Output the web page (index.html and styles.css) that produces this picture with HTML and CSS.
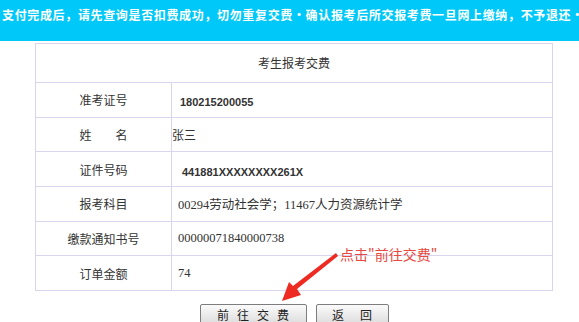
FILE: index.html
```html
<!DOCTYPE html>
<html lang="zh-CN">
<head>
  <meta charset="UTF-8" />
  <title>考生报考交费</title>
  <link rel="stylesheet" href="styles.css">
</head>
<body>

  <!-- Bandeau d'avertissement -->
  <div class="notice">
    <p>支付完成后，请先查询是否扣费成功，切勿重复交费•确认报考后所交报考费一旦网上缴纳，不予退还•</p>
  </div>

  <div class="page">
    <table class="pay-table">
      <tr class="title-row">
        <td colspan="2" class="title-cell">考生报考交费</td>
      </tr>
      <tr>
        <td class="label">准考证号</td>
        <td class="value num">180215200055</td>
      </tr>
      <tr>
        <td class="label">姓&emsp;&emsp;名</td>
        <td class="value flush">张三</td>
      </tr>
      <tr>
        <td class="label">证件号码</td>
        <td class="value num wide">441881XXXXXXXX261X</td>
      </tr>
      <tr>
        <td class="label">报考科目</td>
        <td class="value">00294劳动社会学；11467人力资源统计学</td>
      </tr>
      <tr>
        <td class="label">缴款通知书号</td>
        <td class="value">00000071840000738</td>
      </tr>
      <tr>
        <td class="label">订单金额</td>
        <td class="value">74</td>
      </tr>
    </table>

    <div class="actions">
      <button class="btn btn-pay">前往交费</button>
      <button class="btn btn-back">返&emsp;回</button>
    </div>

    <!-- annotation rouge -->
    <div class="hint">点击"前往交费"</div>
    <svg class="arrow" width="60" height="52" viewBox="0 0 60 52">
      <polygon points="56,2 58,5 17,38 21,44 2,50 9,31 13,35" fill="#ee2b22"/>
    </svg>
  </div>

</body>
</html>
```

FILE: styles.css
```css
body {
  margin: 0;
  padding: 0;
  background: #ffffff;
  font-family: "Noto Sans CJK SC", sans-serif;
  color: #333333;
  overflow: hidden;
}

.notice {
  height: 41px;
  background-color: #00c9fa;
  overflow: hidden;
}

.notice p {
  margin: 0;
  padding: 7px 0 0 2px;
  white-space: nowrap;
  color: #ffffff;
  font-weight: bold;
  font-size: 12px;
  letter-spacing: 0.65px;
  line-height: 16px;
}

.page {
  position: relative;
  width: 518px;
  margin-left: 35px;
  padding-top: 2px;
}

.pay-table {
  width: 518px;
  border-collapse: collapse;
  font-size: 12px;
}

.pay-table tr {
  height: 34.7px;
}

.pay-table tr.title-row {
  height: 39px;
}

.pay-table td {
  border: 1px solid #d8d6ee;
  padding: 0;
}

.pay-table .title-cell {
  text-align: center;
  color: #333333;
  padding-bottom: 2px;
}

.label {
  width: 135px;
  text-align: center;
}

.value {
  padding-left: 6px !important;
  font-family: "Liberation Serif", "Noto Sans CJK SC", serif;
  font-size: 12.5px;
}

.value.flush {
  padding-left: 0 !important;
  font-family: "Noto Sans CJK SC", sans-serif;
  font-size: 12px;
}

.value.num {
  padding-left: 8px !important;
  padding-top: 5px !important;
  font-family: "Liberation Sans", sans-serif;
  font-weight: bold;
  font-size: 11px;
}

.value.wide {
  padding-left: 10px !important;
}

.actions {
  display: flex;
  justify-content: center;
  gap: 9px;
  margin-top: 13px;
}

.btn {
  width: 107px;
  height: 21px;
  padding: 0;
  border: 1px solid #7d7d7d;
  border-radius: 2px;
  background: linear-gradient(#fbfbfb, #dcdcdc);
  font-family: "Noto Sans CJK SC", sans-serif;
  font-size: 12px;
  line-height: 19px;
  color: #222222;
  letter-spacing: 8px;
  text-indent: 8px;
}

.btn-back {
  width: 73px;
  letter-spacing: 2px;
  text-indent: 2px;
}

.hint {
  position: absolute;
  left: 305px;
  top: 203px;
  color: #e8483e;
  font-size: 14px;
  white-space: nowrap;
}

.arrow {
  position: absolute;
  left: 245px;
  top: 210px;
}
```
